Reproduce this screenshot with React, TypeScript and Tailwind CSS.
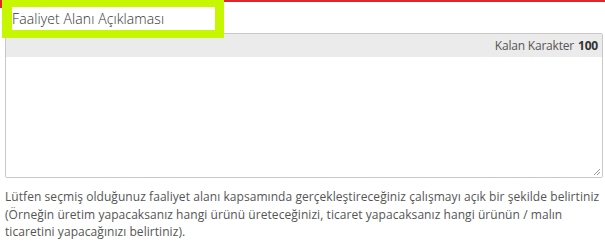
import React from "react";

export default function App() {
  const font = { fontFamily: '"Open Sans", "Noto Sans", sans-serif' };
  return (
    <div className="relative w-[605px] h-[245px] bg-white overflow-hidden" style={font}>
      <div className="h-[2px] bg-[#e0262d] ml-[224px]" />
      <div className="absolute left-0 top-0 w-[2px] h-[8px] bg-[#e0262d]" />
      <div className="pt-[31px] pl-[5px] pr-[2px]">
        <div className="border border-[#c8c8c8] rounded-[2px] flex flex-col h-[145px]">
          <div className="h-[23px] bg-[#ebebeb] flex items-center justify-end pr-[4px] text-[12px] text-[#555] tracking-[-0.2px]">
            <span>Kalan Karakter</span>
            <span className="font-bold text-[#333] ml-[4px]">100</span>
          </div>
          <div className="flex-1 relative bg-white">
            <svg className="absolute right-[1px] bottom-[1px]" width="9" height="9" viewBox="0 0 9 9">
              <path d="M8 2 L2 8 M8 5 L5 8" stroke="#999" strokeWidth="1" />
            </svg>
          </div>
        </div>
      </div>
      <p className="pl-[5px] pr-[2px] pt-[10px] text-[12px] leading-[17.5px] text-[#555] tracking-[0.06px]">
        Lütfen seçmiş olduğunuz faaliyet alanı kapsamında gerçekleştireceğiniz çalışmayı açık bir şekilde belirtiniz (Örneğin üretim yapacaksanız hangi ürünü üreteceğinizi, ticaret yapacaksanız hangi ürünün / malın ticaretini yapacağınızı belirtiniz).
      </p>
      <div className="absolute left-[2px] top-0 w-[222px] h-[38px] bg-[#c6f700] pl-[10px] pr-[9px] pt-[7px] pb-[8px]">
        <div className="bg-white h-full flex items-center text-[14px] font-light text-[#333] leading-none tracking-[0.1px]">
          Faaliyet Alanı Açıklaması
        </div>
      </div>
    </div>
  );
}
